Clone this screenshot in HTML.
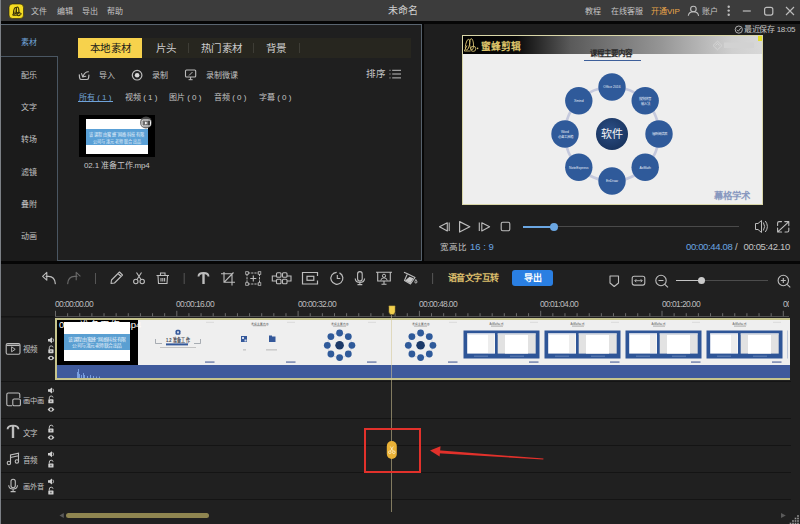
<!DOCTYPE html>
<html lang="zh-CN"><head><meta charset="utf-8">
<style>
*{margin:0;padding:0;box-sizing:border-box}
html,body{width:800px;height:524px;overflow:hidden;background:#060606;font-family:"Liberation Sans",sans-serif;color:#c4c4c4}
.a{position:absolute}
.t{position:absolute;white-space:nowrap;line-height:1}
svg.full{position:absolute;left:0;top:0;width:800px;height:524px;overflow:visible}
</style></head><body>
<div class="a" style="left:0px;top:0px;width:1px;height:524px;background:#7c8086;"></div>
<div class="a" style="left:1px;top:0px;width:799px;height:21px;background:#3c3c3c;"></div>
<div class="a" style="left:1px;top:24px;width:421px;height:237px;background:#1f1f1f;border-top:1px solid #5a6570;border-right:1px solid #56616c"></div>
<div class="a" style="left:1px;top:56px;width:57px;height:205px;background:#1b1b1b;border-top:1px solid #4a5662;border-right:1px solid #4a5662"></div>
<div class="a" style="left:57px;top:260px;width:365px;height:1px;background:#4a5662;"></div>
<div class="a" style="left:424px;top:24px;width:376px;height:237px;background:#1e1e1e;"></div>
<div class="a" style="left:1px;top:264px;width:799px;height:260px;background:#202020;"></div>
<div class="t" style="left:31px;top:8px;font-size:8px;color:#c4c4c4;">文件</div>
<div class="t" style="left:57px;top:8px;font-size:8px;color:#c4c4c4;">编辑</div>
<div class="t" style="left:82px;top:8px;font-size:8px;color:#c4c4c4;">导出</div>
<div class="t" style="left:107px;top:8px;font-size:8px;color:#c4c4c4;">帮助</div>
<div class="t" style="left:388px;top:6px;font-size:10px;color:#d0d0d0;">未命名</div>
<div class="t" style="left:585px;top:8px;font-size:8px;color:#c4c4c4;">教程</div>
<div class="t" style="left:611px;top:8px;font-size:8px;color:#c4c4c4;">在线客服</div>
<div class="t" style="left:651px;top:8px;font-size:8px;color:#eba64a;">开通VIP</div>
<div class="t" style="left:702px;top:8px;font-size:8px;color:#c4c4c4;">账户</div>
<div class="t" style="left:744px;top:26px;font-size:8px;color:#c4c4c4;letter-spacing:-0.3px">最近保存 18:05</div>
<div class="t" style="left:21px;top:39px;font-size:8px;color:#6fa2d8;">素材</div>
<div class="t" style="left:21px;top:72px;font-size:8px;color:#c4c4c4;">配乐</div>
<div class="t" style="left:21px;top:104px;font-size:8px;color:#c4c4c4;">文字</div>
<div class="t" style="left:21px;top:136px;font-size:8px;color:#c4c4c4;">转场</div>
<div class="t" style="left:21px;top:169px;font-size:8px;color:#c4c4c4;">滤镜</div>
<div class="t" style="left:21px;top:201px;font-size:8px;color:#c4c4c4;">叠附</div>
<div class="t" style="left:21px;top:233px;font-size:8px;color:#c4c4c4;">动画</div>
<div class="a" style="left:78px;top:38px;width:333px;height:20px;background:#27261f;"></div>
<div class="a" style="left:78px;top:38px;width:64px;height:20px;background:#f7d24c;"></div>
<div class="t" style="left:90px;top:42.5px;font-size:10.5px;color:#1a1a1a;letter-spacing:0.4px">本地素材</div>
<div class="t" style="left:156px;top:42.5px;font-size:10.5px;color:#cdcdcd;letter-spacing:0.4px">片头</div>
<div class="t" style="left:201px;top:42.5px;font-size:10.5px;color:#cdcdcd;letter-spacing:0.4px">热门素材</div>
<div class="t" style="left:266px;top:42.5px;font-size:10.5px;color:#cdcdcd;letter-spacing:0.4px">背景</div>
<div class="a" style="left:188px;top:43px;width:1px;height:10px;background:#3e3d36;"></div>
<div class="a" style="left:253px;top:43px;width:1px;height:10px;background:#3e3d36;"></div>
<div class="a" style="left:299px;top:43px;width:1px;height:10px;background:#3e3d36;"></div>
<div class="t" style="left:99px;top:72px;font-size:8px;color:#c4c4c4;">导入</div>
<div class="t" style="left:152px;top:72px;font-size:8px;color:#c4c4c4;">录制</div>
<div class="t" style="left:206px;top:72px;font-size:8px;color:#c4c4c4;">录制微课</div>
<div class="t" style="left:366px;top:69px;font-size:9.5px;color:#c4c4c4;">排序</div>
<div class="t" style="left:79px;top:94px;font-size:8px;color:#6fa2d8;">所有 ( 1 )</div>
<div class="a" style="left:78px;top:101px;width:35px;height:1px;background:#6fa2d8;"></div>
<div class="t" style="left:125px;top:94px;font-size:8px;color:#c4c4c4;">视频 ( 1 )</div>
<div class="t" style="left:169px;top:94px;font-size:8px;color:#c4c4c4;">图片 ( 0 )</div>
<div class="t" style="left:214px;top:94px;font-size:8px;color:#c4c4c4;">音频 ( 0 )</div>
<div class="t" style="left:259px;top:94px;font-size:8px;color:#c4c4c4;">字幕 ( 0 )</div>
<div class="a" style="left:79px;top:115px;width:76px;height:42px;background:#000;"></div>
<div class="a" style="left:86px;top:119px;width:62px;height:35px;background:#fff;"></div>
<div class="a" style="left:86px;top:129px;width:62px;height:16px;background:#5aa0d6;"></div>
<div class="t" style="left:84px;top:162px;font-size:8px;color:#c8c8c8;letter-spacing:-0.15px">02.1 准备工作.mp4</div>
<div class="a" style="left:462px;top:35px;width:301px;height:170px;background:#eeeeee;border:1px solid #d9d6a8"></div>
<div class="a" style="left:463px;top:36px;width:299px;height:18px;background:linear-gradient(90deg,#000 0%,#0a0a0a 18%,#5a5a5a 36%,#959595 66%,#cfcfcf 90%,#d8d8d8 100%)"></div>
<div class="a" style="left:757.5px;top:36px;width:4.5px;height:4.5px;background:#e2dc28;"></div>
<div class="t" style="left:481px;top:41.5px;font-size:9.8px;color:#dcc36a;font-weight:bold">蜜蜂剪辑</div>
<div class="t" style="left:590px;top:50px;font-size:7.5px;color:#2a2a2a;font-weight:bold">课程主要内容</div>
<div class="a" style="left:584px;top:60px;width:57px;height:1px;background:#3d5f9a;"></div>
<div class="t" style="left:714px;top:191px;font-size:9.4px;color:#8898bf;font-weight:bold">幕格学术</div>
<div class="a" style="left:523px;top:226px;width:216px;height:1px;background:#4a4a4a;"></div>
<div class="a" style="left:523px;top:226px;width:31px;height:2px;background:#6aa6e2;"></div>
<div class="a" style="left:550px;top:223px;width:8px;height:8px;border-radius:50%;background:#6aa6e2"></div>
<div class="t" style="left:440px;top:243px;font-size:8.5px;color:#c4c4c4;">宽高比</div>
<div class="t" style="left:470px;top:242px;font-size:9.5px;color:#6aa6e2;">16 : 9</div>
<div class="t" style="left:686px;top:242px;font-size:9.5px;color:#6aa6e2;letter-spacing:-0.35px">00:00:44.08</div>
<div class="t" style="left:735px;top:242px;font-size:9.5px;color:#c4c4c4;">/</div>
<div class="t" style="left:743.5px;top:242px;font-size:9.5px;color:#c4c4c4;letter-spacing:-0.35px">00:05:42.10</div>
<div class="t" style="left:447.5px;top:273.5px;font-size:9px;color:#dcbe6c;font-weight:bold;letter-spacing:-0.5px">语音文字互转</div>
<div class="a" style="left:512px;top:270px;width:41px;height:16px;background:#2a7fe2;border-radius:3px"></div>
<div class="t" style="left:524px;top:274px;font-size:9px;color:#ffffff;font-weight:bold">导出</div>
<div class="a" style="left:676px;top:280px;width:92px;height:1px;background:#4c4c4c;"></div>
<div class="a" style="left:676px;top:279.8px;width:25px;height:1.6px;background:#c4c4c4;"></div>
<div class="a" style="left:697.5px;top:277px;width:7px;height:7px;border-radius:50%;background:#cacaca"></div>
<div class="a" style="left:0;top:290px;width:789px;height:20px;overflow:hidden">
<div class="t" style="left:55px;top:9.5px;font-size:8.5px;color:#bdbdbd;letter-spacing:-0.62px">00:00:00.00</div>
<div class="t" style="left:176px;top:9.5px;font-size:8.5px;color:#bdbdbd;letter-spacing:-0.62px">00:00:16.00</div>
<div class="t" style="left:298px;top:9.5px;font-size:8.5px;color:#bdbdbd;letter-spacing:-0.62px">00:00:32.00</div>
<div class="t" style="left:419px;top:9.5px;font-size:8.5px;color:#bdbdbd;letter-spacing:-0.62px">00:00:48.00</div>
<div class="t" style="left:540px;top:9.5px;font-size:8.5px;color:#bdbdbd;letter-spacing:-0.62px">00:01:04.00</div>
<div class="t" style="left:662px;top:9.5px;font-size:8.5px;color:#bdbdbd;letter-spacing:-0.62px">00:01:20.00</div>
<div class="t" style="left:783px;top:9.5px;font-size:8.5px;color:#bdbdbd;letter-spacing:-0.62px">00:01:36.00</div>
</div>
<div class="a" style="left:1px;top:381px;width:790px;height:1px;background:#141414;"></div>
<div class="a" style="left:1px;top:418px;width:790px;height:1px;background:#141414;"></div>
<div class="a" style="left:1px;top:445px;width:790px;height:1px;background:#141414;"></div>
<div class="a" style="left:1px;top:472px;width:790px;height:1px;background:#141414;"></div>
<div class="a" style="left:1px;top:499px;width:790px;height:1px;background:#141414;"></div>
<div class="t" style="left:23px;top:346px;font-size:7.5px;color:#c4c4c4;">视频</div>
<div class="t" style="left:23px;top:397px;font-size:7.2px;color:#c4c4c4;">画中画</div>
<div class="t" style="left:23px;top:429.5px;font-size:7.5px;color:#c4c4c4;">文字</div>
<div class="t" style="left:23px;top:456.5px;font-size:7.5px;color:#c4c4c4;">音频</div>
<div class="t" style="left:23px;top:482.5px;font-size:7.2px;color:#c4c4c4;">画外音</div>
<svg class="full" viewBox="0 0 800 524"><rect x="9" y="4" width="14.5" height="14.5" rx="3.5" fill="#f5dc22" stroke="#2a2400" stroke-width="0.6"/><g fill="none" stroke="#3a3208" stroke-width="1.1"><ellipse cx="15" cy="10.8" rx="1.3" ry="3.4" transform="rotate(12 15 10.8)"/><ellipse cx="17.6" cy="10.5" rx="1.3" ry="3.5" transform="rotate(-4 17.6 10.5)"/><path d="M12.6 15.3 L14.4 11.8 M12.6 15.3 L16.8 15.3"/><circle cx="18.6" cy="14" r="1.7"/></g><circle cx="21.3" cy="13.8" r="0.6" fill="#3a3208"/><circle cx="693.4" cy="9" r="2.8" fill="none" stroke="#bdbdbd" stroke-width="1.1"/><path d="M688.3 15.8 Q688.8 11.8 693.4 11.8 Q698 11.8 698.6 15.8" fill="none" stroke="#bdbdbd" stroke-width="1.1"/><circle cx="728.7" cy="6.7" r="1.2" fill="#bdbdbd"/><circle cx="728.7" cy="10.6" r="1.2" fill="#bdbdbd"/><circle cx="728.7" cy="14.8" r="1.2" fill="#bdbdbd"/><line x1="742.8" y1="11" x2="750.8" y2="11" stroke="#bdbdbd" stroke-width="1.2"/><rect x="764.6" y="7.3" width="8.2" height="7.8" rx="2" fill="none" stroke="#bdbdbd" stroke-width="1.2"/><path d="M786 7 L794 15 M794 7 L786 15" stroke="#bdbdbd" stroke-width="1.1"/><circle cx="738.8" cy="29.6" r="3.6" fill="none" stroke="#bdbdbd" stroke-width="0.9"/><path d="M736.9 29.7 L738.4 31.2 L740.8 27.9" fill="none" stroke="#bdbdbd" stroke-width="0.9"/><path d="M79.3 74.8 L79.6 77.8 Q79.9 79.5 81.6 79.5 L86.6 79.5 Q88.3 79.5 88.6 77.8 L88.9 75.2" fill="none" stroke="#bdbdbd" stroke-width="1.2" stroke-linecap="round"/><path d="M88.4 71.8 Q85 71.6 83.2 76 M81.6 73.6 L82.7 77 L85.8 76.2" fill="none" stroke="#bdbdbd" stroke-width="1.1" stroke-linecap="round" stroke-linejoin="round"/><circle cx="137.1" cy="75.2" r="4.8" fill="none" stroke="#bdbdbd" stroke-width="1.2"/><circle cx="137.1" cy="75.2" r="2.3" fill="#d8d8d8"/><rect x="185.5" y="70" width="10.2" height="7" rx="1" fill="none" stroke="#bdbdbd" stroke-width="1.1"/><path d="M190.6 77 L190.6 79.5 M188.6 79.7 L192.6 79.7 M189 75.5 L192.5 72" fill="none" stroke="#bdbdbd" stroke-width="1"/><rect x="389.5" y="69.8" width="1" height="1" fill="#bdbdbd"/><line x1="392.2" y1="70.3" x2="401" y2="70.3" stroke="#bdbdbd" stroke-width="1"/><rect x="389.5" y="73.5" width="1" height="1" fill="#bdbdbd"/><line x1="392.2" y1="74" x2="401" y2="74" stroke="#bdbdbd" stroke-width="1"/><rect x="389.5" y="77.4" width="1" height="1" fill="#bdbdbd"/><line x1="392.2" y1="77.9" x2="401" y2="77.9" stroke="#bdbdbd" stroke-width="1"/><text x="117" y="136.3" font-size="4.6" fill="#e8f2fb" text-anchor="middle" textLength="56" lengthAdjust="spacingAndGlyphs">该课程由蜜蜂“网络科技有限</text><text x="117" y="142.5" font-size="4.6" fill="#e8f2fb" text-anchor="middle" textLength="49" lengthAdjust="spacingAndGlyphs">公司与漆元老师联合出品</text><circle cx="146" cy="122.5" r="6" fill="#555" opacity="0.85"/><rect x="142" y="120" width="8.5" height="6" rx="1.2" fill="none" stroke="#f2f2f2" stroke-width="1"/><path d="M145 121.5 L147.8 123 L145 124.5 Z" fill="#f2f2f2"/><g fill="none" stroke="#dcc676" stroke-width="0.85"><ellipse cx="467.6" cy="44.6" rx="1.9" ry="5.4" transform="rotate(12 467.6 44.6)"/><ellipse cx="471.6" cy="44.2" rx="1.9" ry="5.6" transform="rotate(-4 471.6 44.2)"/><path d="M464.3 51 L467 45.5 M464.3 51 L470.5 51"/><circle cx="473.2" cy="48.8" r="2.6"/></g><circle cx="477.6" cy="48.4" r="0.8" fill="#dcc676"/><g fill="none" stroke="#d6d6d6" stroke-width="0.9"><path d="M713 45.5 L717.5 41.2 L722 45.5 L717.5 49.8 Z"/><path d="M715.5 45.5 L717.5 43.5 L719.5 45.5"/></g><rect x="724" y="42.5" width="30" height="5.5" fill="#d2d2d2"/><circle cx="612" cy="134" r="47" fill="none" stroke="#c5c9dd" stroke-width="2.6"/><circle cx="612.0" cy="87.0" r="13.7" fill="#2f5a9a"/><text x="612.0" y="88.3" font-size="3.4" fill="#e6ecf6" text-anchor="middle" font-family="Liberation Sans">Office 2016</text><circle cx="645.2" cy="100.8" r="13.7" fill="#2f5a9a"/><text x="645.2" y="99.6" font-size="3.4" fill="#e6ecf6" text-anchor="middle" font-family="Liberation Sans">搜狗拼音</text><text x="645.2" y="104.6" font-size="3.4" fill="#e6ecf6" text-anchor="middle" font-family="Liberation Sans">输入法</text><circle cx="659.0" cy="134.0" r="13.7" fill="#2f5a9a"/><text x="659.0" y="135.3" font-size="3.4" fill="#e6ecf6" text-anchor="middle" font-family="Liberation Sans">福昕阅读器</text><circle cx="645.2" cy="167.2" r="13.7" fill="#2f5a9a"/><text x="645.2" y="168.5" font-size="3.4" fill="#e6ecf6" text-anchor="middle" font-family="Liberation Sans">AxMath</text><circle cx="612.0" cy="181.0" r="13.7" fill="#2f5a9a"/><text x="612.0" y="182.3" font-size="3.4" fill="#e6ecf6" text-anchor="middle" font-family="Liberation Sans">EnDraw</text><circle cx="578.8" cy="167.2" r="13.7" fill="#2f5a9a"/><text x="578.8" y="168.5" font-size="3.4" fill="#e6ecf6" text-anchor="middle" font-family="Liberation Sans">NoteExpress</text><circle cx="565.0" cy="134.0" r="13.7" fill="#2f5a9a"/><text x="565.0" y="132.8" font-size="3.4" fill="#e6ecf6" text-anchor="middle" font-family="Liberation Sans">Word</text><text x="565.0" y="137.8" font-size="3.4" fill="#e6ecf6" text-anchor="middle" font-family="Liberation Sans">必备工具箱</text><circle cx="578.8" cy="100.8" r="13.7" fill="#2f5a9a"/><text x="578.8" y="102.1" font-size="3.4" fill="#e6ecf6" text-anchor="middle" font-family="Liberation Sans">Xmind</text><defs><radialGradient id="cg" cx="0.45" cy="0.4" r="0.6"><stop offset="0" stop-color="#2c4f86"/><stop offset="1" stop-color="#19345f"/></radialGradient></defs><circle cx="612" cy="134" r="16" fill="url(#cg)"/><text x="612" y="138.3" font-size="11" fill="#f4f4f4" text-anchor="middle" font-family="Liberation Sans">软件</text><path d="M447.3 222.7 L439.5 226.8 L447.3 231 Z" fill="none" stroke="#bdbdbd" stroke-width="1.1" stroke-linejoin="round"/><line x1="449.2" y1="222.5" x2="449.2" y2="231" stroke="#bdbdbd" stroke-width="1.1"/><path d="M459.6 221.6 L469.8 226.8 L459.6 232 Z" fill="none" stroke="#bdbdbd" stroke-width="1.2" stroke-linejoin="round"/><line x1="479.3" y1="222.5" x2="479.3" y2="231" stroke="#bdbdbd" stroke-width="1.1"/><path d="M481.8 222.7 L489.6 226.8 L481.8 231 Z" fill="none" stroke="#bdbdbd" stroke-width="1.1" stroke-linejoin="round"/><rect x="501.2" y="222.2" width="8.6" height="8.6" rx="1.5" fill="none" stroke="#bdbdbd" stroke-width="1.1"/><path d="M755.5 223.5 L758 223.5 L761.5 220.5 L761.5 232.5 L758 229.5 L755.5 229.5 Z" fill="none" stroke="#bdbdbd" stroke-width="1"/><path d="M763.3 222.5 Q766 226.5 763.3 230.5 M765.3 221 Q769.5 226.5 765.3 232" fill="none" stroke="#bdbdbd" stroke-width="1"/><path d="M777.6 225.5 L777.6 223 Q777.6 221.6 779 221.6 L781.5 221.6 M788.8 228 L788.8 230.6 Q788.8 232 787.4 232 L785 232 M784.8 221.6 L788.8 221.6 L788.8 225.6 M777.6 228 L777.6 232 L781.6 232 M778.3 231.3 L788.1 222.3" fill="none" stroke="#bdbdbd" stroke-width="1.1" stroke-linecap="round" stroke-linejoin="round"/><path d="M55.3 283.6 Q54.8 276.3 48.5 276.3 L46 276.3" fill="none" stroke="#bdbdbd" stroke-width="1.2" stroke-linecap="round"/><path d="M42.6 276.3 L46.8 272.4 L46.8 280.2 Z" fill="none" stroke="#bdbdbd" stroke-width="1.1" stroke-linejoin="round"/><path d="M67.7 283.6 Q68.2 276.3 74.5 276.3 L77 276.3" fill="none" stroke="#686868" stroke-width="1.2" stroke-linecap="round"/><path d="M80.4 276.3 L76.2 272.4 L76.2 280.2" fill="none" stroke="#686868" stroke-width="1.1" stroke-linejoin="round"/><line x1="95.5" y1="273" x2="95.5" y2="284" stroke="#555" stroke-width="1"/><line x1="184.2" y1="273" x2="184.2" y2="284" stroke="#555" stroke-width="1"/><line x1="432.6" y1="273" x2="432.6" y2="284" stroke="#555" stroke-width="1"/><path d="M111 283.5 L111.5 280 L119.5 272 L122.5 275 L114.5 283 Z M118 273.5 L121 276.5" fill="none" stroke="#bdbdbd" stroke-width="1.1" stroke-linejoin="round"/><circle cx="135.8" cy="281.5" r="2.2" fill="none" stroke="#bdbdbd" stroke-width="1.1"/><circle cx="142.2" cy="281.5" r="2.2" fill="none" stroke="#bdbdbd" stroke-width="1.1"/><path d="M137 279.5 L141.5 272.5 M141 279.5 L136.5 272.5" stroke="#bdbdbd" stroke-width="1.1"/><path d="M156.5 275.5 L169 275.5 M160.5 275.5 L160.5 273 L165 273 L165 275.5 M158 276 L158.5 283.5 L167 283.5 L167.5 276 M161 278 L161 281.5 M162.8 278 L162.8 281.5 M164.6 278 L164.6 281.5" fill="none" stroke="#bdbdbd" stroke-width="1.1"/><path d="M198.5 276.5 Q198.5 273 203.5 273 Q208.5 273 208.5 276.5" fill="none" stroke="#bdbdbd" stroke-width="1.9"/><path d="M203.5 273 L203.5 284" stroke="#bdbdbd" stroke-width="2.4"/><path d="M224 272 L224 282.2 L235 282.2 M221 273.8 L232 273.8 L232 285.5 M224.5 281.8 L233.5 272.5" fill="none" stroke="#bdbdbd" stroke-width="1.1"/><path d="M248 273 L258.5 273 M248 284 L258.5 284 M247 274 L247 283 M259.5 274 L259.5 283" fill="none" stroke="#bdbdbd" stroke-width="1" stroke-dasharray="2.2 1"/><rect x="245.7" y="271.7" width="2.6" height="2.6" fill="none" stroke="#bdbdbd" stroke-width="0.8"/><rect x="258.2" y="271.7" width="2.6" height="2.6" fill="none" stroke="#bdbdbd" stroke-width="0.8"/><rect x="245.7" y="282.7" width="2.6" height="2.6" fill="none" stroke="#bdbdbd" stroke-width="0.8"/><rect x="258.2" y="282.7" width="2.6" height="2.6" fill="none" stroke="#bdbdbd" stroke-width="0.8"/><path d="M253.3 275.5 L253.3 281.5 M250.3 278.5 L256.3 278.5" stroke="#bdbdbd" stroke-width="1.1"/><g fill="none" stroke="#bdbdbd" stroke-width="1.1"><rect x="276.5" y="272.8" width="4.5" height="4.5" rx="1"/><rect x="282.5" y="272.8" width="4.5" height="4.5" rx="1"/><rect x="276.5" y="279.3" width="4.5" height="4.5" rx="1"/><rect x="282.5" y="279.3" width="4.5" height="4.5" rx="1"/><path d="M276.5 276 L272.3 276 L272.3 281 L276.5 281 M287 276 L291 276 L291 281 L287 281"/></g><path d="M317.5 276 L317.5 272.5 L302.5 272.5 L302.5 284 L317.5 284 L317.5 280.5" fill="none" stroke="#bdbdbd" stroke-width="1.2"/><rect x="307" y="276.3" width="6.8" height="4" fill="none" stroke="#bdbdbd" stroke-width="1.2"/><path d="M339.5 272.9 A6 6 0 1 1 336.7 272.3" fill="none" stroke="#bdbdbd" stroke-width="1.2"/><path d="M337.3 275 L337.3 278.5 L340.3 278.5" fill="none" stroke="#bdbdbd" stroke-width="1.1"/><rect x="357.6" y="271.6" width="4.6" height="9.5" rx="2.3" fill="none" stroke="#bdbdbd" stroke-width="1.1"/><path d="M355.2 278.5 Q355.5 282.5 359.9 282.5 Q364.3 282.5 364.6 278.5 M359.9 282.5 L359.9 284.5 M357.5 284.6 L362.3 284.6" fill="none" stroke="#bdbdbd" stroke-width="1.1"/><path d="M376 272.2 L392 272.2 M377.7 272.5 L377.7 281 L390.3 281 L390.3 272.5 M384 281 L384 284 M381.5 284.3 L386.5 284.3" fill="none" stroke="#bdbdbd" stroke-width="1.1"/><circle cx="384" cy="275.8" r="1.6" fill="none" stroke="#bdbdbd" stroke-width="1"/><path d="M380.8 280.5 Q381 277.8 384 277.8 Q387 277.8 387.2 280.5" fill="none" stroke="#bdbdbd" stroke-width="1"/><path d="M404 272.2 L408 274 L415 277.5 L410.5 284 L404.5 280.5 L407.5 273.5" fill="none" stroke="#bdbdbd" stroke-width="1.1" stroke-linejoin="round"/><path d="M405.2 280.5 L409.5 276.8 L413.5 278.3 L410.4 283.2 Z" fill="#c8c8c8"/><path d="M415.8 279.5 Q414.3 282 415.2 283 Q416.8 283.5 417 282 Q417 281 415.8 279.5 Z" fill="none" stroke="#bdbdbd" stroke-width="0.9"/><path d="M610 276 L618.5 276 L618.5 283 L614.2 286.5 L610 283 Z" fill="none" stroke="#bdbdbd" stroke-width="1.1" stroke-linejoin="round"/><rect x="632.2" y="276.3" width="12.6" height="8.8" rx="2" fill="none" stroke="#bdbdbd" stroke-width="1.1"/><path d="M634.8 280.7 L642.2 280.7 M636.3 279.2 L634.8 280.7 L636.3 282.2 M640.7 279.2 L642.2 280.7 L640.7 282.2" fill="none" stroke="#bdbdbd" stroke-width="0.9"/><circle cx="661" cy="280.5" r="5.2" fill="none" stroke="#bdbdbd" stroke-width="1.1"/><path d="M664.8 284.3 L668 287.3 M658.5 280.5 L663.5 280.5" stroke="#bdbdbd" stroke-width="1.1"/><circle cx="783.3" cy="280.5" r="5.2" fill="none" stroke="#bdbdbd" stroke-width="1.1"/><path d="M787.1 284.3 L790.3 287.3 M780.8 280.5 L785.8 280.5 M783.3 278 L783.3 283" stroke="#bdbdbd" stroke-width="1.1"/><rect x="1" y="316" width="54" height="1.5" fill="#151515"/><line x1="55" y1="316.5" x2="789" y2="316.5" stroke="#505050" stroke-width="1"/><line x1="55.50" y1="310.8" x2="55.50" y2="316.3" stroke="#747474" stroke-width="0.9"/><line x1="67.63" y1="313.2" x2="67.63" y2="316.3" stroke="#747474" stroke-width="0.9"/><line x1="79.76" y1="313.2" x2="79.76" y2="316.3" stroke="#747474" stroke-width="0.9"/><line x1="91.89" y1="313.2" x2="91.89" y2="316.3" stroke="#747474" stroke-width="0.9"/><line x1="104.02" y1="313.2" x2="104.02" y2="316.3" stroke="#747474" stroke-width="0.9"/><line x1="116.15" y1="313.2" x2="116.15" y2="316.3" stroke="#747474" stroke-width="0.9"/><line x1="128.28" y1="313.2" x2="128.28" y2="316.3" stroke="#747474" stroke-width="0.9"/><line x1="140.41" y1="313.2" x2="140.41" y2="316.3" stroke="#747474" stroke-width="0.9"/><line x1="152.54" y1="313.2" x2="152.54" y2="316.3" stroke="#747474" stroke-width="0.9"/><line x1="164.67" y1="313.2" x2="164.67" y2="316.3" stroke="#747474" stroke-width="0.9"/><line x1="176.80" y1="310.8" x2="176.80" y2="316.3" stroke="#747474" stroke-width="0.9"/><line x1="188.93" y1="313.2" x2="188.93" y2="316.3" stroke="#747474" stroke-width="0.9"/><line x1="201.06" y1="313.2" x2="201.06" y2="316.3" stroke="#747474" stroke-width="0.9"/><line x1="213.19" y1="313.2" x2="213.19" y2="316.3" stroke="#747474" stroke-width="0.9"/><line x1="225.32" y1="313.2" x2="225.32" y2="316.3" stroke="#747474" stroke-width="0.9"/><line x1="237.45" y1="313.2" x2="237.45" y2="316.3" stroke="#747474" stroke-width="0.9"/><line x1="249.58" y1="313.2" x2="249.58" y2="316.3" stroke="#747474" stroke-width="0.9"/><line x1="261.71" y1="313.2" x2="261.71" y2="316.3" stroke="#747474" stroke-width="0.9"/><line x1="273.84" y1="313.2" x2="273.84" y2="316.3" stroke="#747474" stroke-width="0.9"/><line x1="285.97" y1="313.2" x2="285.97" y2="316.3" stroke="#747474" stroke-width="0.9"/><line x1="298.10" y1="310.8" x2="298.10" y2="316.3" stroke="#747474" stroke-width="0.9"/><line x1="310.23" y1="313.2" x2="310.23" y2="316.3" stroke="#747474" stroke-width="0.9"/><line x1="322.36" y1="313.2" x2="322.36" y2="316.3" stroke="#747474" stroke-width="0.9"/><line x1="334.49" y1="313.2" x2="334.49" y2="316.3" stroke="#747474" stroke-width="0.9"/><line x1="346.62" y1="313.2" x2="346.62" y2="316.3" stroke="#747474" stroke-width="0.9"/><line x1="358.75" y1="313.2" x2="358.75" y2="316.3" stroke="#747474" stroke-width="0.9"/><line x1="370.88" y1="313.2" x2="370.88" y2="316.3" stroke="#747474" stroke-width="0.9"/><line x1="383.01" y1="313.2" x2="383.01" y2="316.3" stroke="#747474" stroke-width="0.9"/><line x1="395.14" y1="313.2" x2="395.14" y2="316.3" stroke="#747474" stroke-width="0.9"/><line x1="407.27" y1="313.2" x2="407.27" y2="316.3" stroke="#747474" stroke-width="0.9"/><line x1="419.40" y1="310.8" x2="419.40" y2="316.3" stroke="#747474" stroke-width="0.9"/><line x1="431.53" y1="313.2" x2="431.53" y2="316.3" stroke="#747474" stroke-width="0.9"/><line x1="443.66" y1="313.2" x2="443.66" y2="316.3" stroke="#747474" stroke-width="0.9"/><line x1="455.79" y1="313.2" x2="455.79" y2="316.3" stroke="#747474" stroke-width="0.9"/><line x1="467.92" y1="313.2" x2="467.92" y2="316.3" stroke="#747474" stroke-width="0.9"/><line x1="480.05" y1="313.2" x2="480.05" y2="316.3" stroke="#747474" stroke-width="0.9"/><line x1="492.18" y1="313.2" x2="492.18" y2="316.3" stroke="#747474" stroke-width="0.9"/><line x1="504.31" y1="313.2" x2="504.31" y2="316.3" stroke="#747474" stroke-width="0.9"/><line x1="516.44" y1="313.2" x2="516.44" y2="316.3" stroke="#747474" stroke-width="0.9"/><line x1="528.57" y1="313.2" x2="528.57" y2="316.3" stroke="#747474" stroke-width="0.9"/><line x1="540.70" y1="310.8" x2="540.70" y2="316.3" stroke="#747474" stroke-width="0.9"/><line x1="552.83" y1="313.2" x2="552.83" y2="316.3" stroke="#747474" stroke-width="0.9"/><line x1="564.96" y1="313.2" x2="564.96" y2="316.3" stroke="#747474" stroke-width="0.9"/><line x1="577.09" y1="313.2" x2="577.09" y2="316.3" stroke="#747474" stroke-width="0.9"/><line x1="589.22" y1="313.2" x2="589.22" y2="316.3" stroke="#747474" stroke-width="0.9"/><line x1="601.35" y1="313.2" x2="601.35" y2="316.3" stroke="#747474" stroke-width="0.9"/><line x1="613.48" y1="313.2" x2="613.48" y2="316.3" stroke="#747474" stroke-width="0.9"/><line x1="625.61" y1="313.2" x2="625.61" y2="316.3" stroke="#747474" stroke-width="0.9"/><line x1="637.74" y1="313.2" x2="637.74" y2="316.3" stroke="#747474" stroke-width="0.9"/><line x1="649.87" y1="313.2" x2="649.87" y2="316.3" stroke="#747474" stroke-width="0.9"/><line x1="662.00" y1="310.8" x2="662.00" y2="316.3" stroke="#747474" stroke-width="0.9"/><line x1="674.13" y1="313.2" x2="674.13" y2="316.3" stroke="#747474" stroke-width="0.9"/><line x1="686.26" y1="313.2" x2="686.26" y2="316.3" stroke="#747474" stroke-width="0.9"/><line x1="698.39" y1="313.2" x2="698.39" y2="316.3" stroke="#747474" stroke-width="0.9"/><line x1="710.52" y1="313.2" x2="710.52" y2="316.3" stroke="#747474" stroke-width="0.9"/><line x1="722.65" y1="313.2" x2="722.65" y2="316.3" stroke="#747474" stroke-width="0.9"/><line x1="734.78" y1="313.2" x2="734.78" y2="316.3" stroke="#747474" stroke-width="0.9"/><line x1="746.91" y1="313.2" x2="746.91" y2="316.3" stroke="#747474" stroke-width="0.9"/><line x1="759.04" y1="313.2" x2="759.04" y2="316.3" stroke="#747474" stroke-width="0.9"/><line x1="771.17" y1="313.2" x2="771.17" y2="316.3" stroke="#747474" stroke-width="0.9"/><line x1="783.30" y1="310.8" x2="783.30" y2="316.3" stroke="#747474" stroke-width="0.9"/><rect x="6.2" y="343.5" width="13.8" height="10.8" rx="1.5" fill="none" stroke="#bdbdbd" stroke-width="1.1"/><line x1="6.5" y1="345.3" x2="19.7" y2="345.3" stroke="#bdbdbd" stroke-width="1.5"/><path d="M11.6 346.8 L15.2 349.3 L11.6 351.8 Z" fill="none" stroke="#bdbdbd" stroke-width="0.9"/><path d="M12 405.8 L8.3 405.8 Q6.8 405.8 6.8 404.3 L6.8 394.5 Q6.8 393 8.3 393 L18.3 393 Q19.8 393 19.8 394.5 L19.8 398" fill="none" stroke="#bdbdbd" stroke-width="1.1"/><rect x="12.8" y="399" width="7.6" height="6.8" rx="1.3" fill="none" stroke="#bdbdbd" stroke-width="1.1"/><path d="M7.6 429.2 Q7.6 425.6 13 425.6 Q18.4 425.6 18.4 429.2" fill="none" stroke="#bdbdbd" stroke-width="1.9"/><path d="M13 425.5 L13 438" stroke="#bdbdbd" stroke-width="2.4"/><path d="M10.5 463 L10.5 455 L18.5 453.3 L18.5 461.5 M10.5 457.5 L18.5 455.8" fill="none" stroke="#bdbdbd" stroke-width="1.1"/><circle cx="8.9" cy="463" r="1.7" fill="none" stroke="#bdbdbd" stroke-width="1.1"/><circle cx="16.9" cy="461.5" r="1.7" fill="none" stroke="#bdbdbd" stroke-width="1.1"/><rect x="11" y="479.2" width="4.3" height="8.5" rx="2.1" fill="none" stroke="#bdbdbd" stroke-width="1.1"/><path d="M8.7 485.3 Q8.9 489 13.1 489 Q17.3 489 17.5 485.3 M13.1 489 L13.1 491.5 M10.6 491.6 L15.6 491.6" fill="none" stroke="#bdbdbd" stroke-width="1.1"/><path d="M48 338.9 L49.6 338.9 L52 337.2 L52 343.2 L49.6 341.5 L48 341.5 Z" fill="#d0d0d0"/><path d="M52.8 338.4 Q54.3 340.2 52.8 342.0" fill="none" stroke="#d0d0d0" stroke-width="0.9"/><rect x="48.3" y="349.2" width="5.2" height="4" rx="0.6" fill="#d0d0d0"/><path d="M49.3 349.2 L49.3 347.7 Q49.3 345.9 51.2 345.9 Q53 345.9 53 347.4" fill="none" stroke="#d0d0d0" stroke-width="0.9"/><rect x="50.5" y="350.4" width="0.9" height="1.6" fill="#202020"/><path d="M47.6 358 Q51 353.4 54.4 358 Q51 362.6 47.6 358 Z" fill="#d0d0d0"/><circle cx="51" cy="358" r="1.2" fill="#202020"/><path d="M48 389.2 L49.6 389.2 L52 387.5 L52 393.5 L49.6 391.8 L48 391.8 Z" fill="#d0d0d0"/><path d="M52.8 388.7 Q54.3 390.5 52.8 392.3" fill="none" stroke="#d0d0d0" stroke-width="0.9"/><rect x="48.3" y="399.3" width="5.2" height="4" rx="0.6" fill="#d0d0d0"/><path d="M49.3 399.3 L49.3 397.8 Q49.3 396.0 51.2 396.0 Q53 396.0 53 397.5" fill="none" stroke="#d0d0d0" stroke-width="0.9"/><rect x="50.5" y="400.5" width="0.9" height="1.6" fill="#202020"/><path d="M47.6 409.5 Q51 404.9 54.4 409.5 Q51 414.1 47.6 409.5 Z" fill="#d0d0d0"/><circle cx="51" cy="409.5" r="1.2" fill="#202020"/><rect x="48.3" y="428.5" width="5.2" height="4" rx="0.6" fill="#d0d0d0"/><path d="M49.3 428.5 L49.3 427.0 Q49.3 425.2 51.2 425.2 Q53 425.2 53 426.7" fill="none" stroke="#d0d0d0" stroke-width="0.9"/><rect x="50.5" y="429.7" width="0.9" height="1.6" fill="#202020"/><path d="M47.6 437.5 Q51 432.9 54.4 437.5 Q51 442.1 47.6 437.5 Z" fill="#d0d0d0"/><circle cx="51" cy="437.5" r="1.2" fill="#202020"/><path d="M48 452.9 L49.6 452.9 L52 451.2 L52 457.2 L49.6 455.5 L48 455.5 Z" fill="#d0d0d0"/><path d="M52.8 452.4 Q54.3 454.2 52.8 456.0" fill="none" stroke="#d0d0d0" stroke-width="0.9"/><rect x="48.3" y="463.5" width="5.2" height="4" rx="0.6" fill="#d0d0d0"/><path d="M49.3 463.5 L49.3 462.0 Q49.3 460.2 51.2 460.2 Q53 460.2 53 461.7" fill="none" stroke="#d0d0d0" stroke-width="0.9"/><rect x="50.5" y="464.7" width="0.9" height="1.6" fill="#202020"/><path d="M48 480.2 L49.6 480.2 L52 478.5 L52 484.5 L49.6 482.8 L48 482.8 Z" fill="#d0d0d0"/><path d="M52.8 479.7 Q54.3 481.5 52.8 483.3" fill="none" stroke="#d0d0d0" stroke-width="0.9"/><rect x="48.3" y="490.5" width="5.2" height="4" rx="0.6" fill="#d0d0d0"/><path d="M49.3 490.5 L49.3 489.0 Q49.3 487.2 51.2 487.2 Q53 487.2 53 488.7" fill="none" stroke="#d0d0d0" stroke-width="0.9"/><rect x="50.5" y="491.7" width="0.9" height="1.6" fill="#202020"/></svg>
<div class="a" style="left:55px;top:317.5px;width:734.5px;height:62.5px;background:#efefef;border:2px solid #c6c48c;border-right:none"></div>
<div class="a" style="left:57px;top:364.5px;width:732.5px;height:13.5px;background:#3f5a9c;"></div>
<div class="a" style="left:57px;top:319.5px;width:81px;height:45px;background:#000;"></div>
<div class="a" style="left:64px;top:322px;width:66px;height:38.5px;background:#fff;"></div>
<div class="a" style="left:64px;top:334px;width:66px;height:15.7px;background:#5a9fd2;"></div>
<svg class="full" viewBox="0 0 800 524"><defs><clipPath id="clp"><rect x="57" y="319.5" width="730.5" height="58.5"/></clipPath></defs><g clip-path="url(#clp)"><text x="97" y="340.5" font-size="4.2" fill="#eaf3fb" text-anchor="middle" textLength="58" lengthAdjust="spacingAndGlyphs">该课程由蜜蜂“网络科技有限</text><text x="97" y="346.5" font-size="4.2" fill="#eaf3fb" text-anchor="middle" textLength="50" lengthAdjust="spacingAndGlyphs">公司与漆元老师联合出品</text><rect x="175.5" y="329.8" width="5" height="5" rx="1.5" fill="#34589a"/><rect x="177" y="331.3" width="2" height="2" fill="#c8d2e6"/><path d="M155.5 339 L155.5 343.5 L162 343.5 M194 343.5 L200.5 343.5 L200.5 339" fill="none" stroke="#8a909a" stroke-width="0.7"/><text x="178" y="341.6" font-size="5.6" fill="#3c424e" text-anchor="middle" textLength="24" lengthAdjust="spacingAndGlyphs" font-weight="bold">1.2 准备工作</text><rect x="166" y="343.4" width="22" height="2" fill="#34589a"/><rect x="160" y="347" width="36" height="0.8" fill="#b8b8b8"/><rect x="205" y="361.3" width="9.5" height="1.6" fill="#7d8bb3"/><rect x="206" y="321.8" width="8" height="1" fill="#dadada"/><text x="259.5" y="324.7" font-size="2.6" fill="#555" text-anchor="middle">课程主要内容</text><rect x="253" y="325.6" width="13" height="0.5" fill="#666"/><rect x="241" y="336" width="6" height="6" fill="#34589a"/><rect x="242" y="337" width="2" height="2" fill="#cfd8ea"/><rect x="244.5" y="339.5" width="2" height="2" fill="#cfd8ea"/><rect x="269" y="336.5" width="6.5" height="5.5" fill="#34589a"/><rect x="269" y="335.5" width="3" height="1.5" fill="#34589a"/><rect x="243" y="349.5" width="3" height="0.8" fill="#aaa"/><rect x="266" y="349.5" width="11" height="0.8" fill="#aaa"/><rect x="286" y="361.3" width="9.5" height="1.6" fill="#7d8bb3"/><rect x="287" y="321.8" width="8" height="1" fill="#dadada"/><text x="339.6" y="324.8" font-size="2.6" fill="#555" text-anchor="middle">课程主要内容</text><rect x="333.1" y="325.8" width="13" height="0.5" fill="#666"/><circle cx="339.6" cy="345.3" r="12.3" fill="none" stroke="#c6cadb" stroke-width="0.8"/><circle cx="339.60" cy="333.00" r="3.4" fill="#2f5a9a"/><circle cx="348.30" cy="336.60" r="3.4" fill="#2f5a9a"/><circle cx="351.90" cy="345.30" r="3.4" fill="#2f5a9a"/><circle cx="348.30" cy="354.00" r="3.4" fill="#2f5a9a"/><circle cx="339.60" cy="357.60" r="3.4" fill="#2f5a9a"/><circle cx="330.90" cy="354.00" r="3.4" fill="#2f5a9a"/><circle cx="327.30" cy="345.30" r="3.4" fill="#2f5a9a"/><circle cx="330.90" cy="336.60" r="3.4" fill="#2f5a9a"/><circle cx="339.6" cy="345.3" r="4.3" fill="#1d3a68"/><rect x="367" y="361.3" width="9.5" height="1.6" fill="#7d8bb3"/><rect x="368" y="321.8" width="8" height="1" fill="#dadada"/><text x="420.6" y="324.8" font-size="2.6" fill="#555" text-anchor="middle">课程主要内容</text><rect x="414.1" y="325.8" width="13" height="0.5" fill="#666"/><circle cx="420.6" cy="345.3" r="12.3" fill="none" stroke="#c6cadb" stroke-width="0.8"/><circle cx="420.60" cy="333.00" r="3.4" fill="#2f5a9a"/><circle cx="429.30" cy="336.60" r="3.4" fill="#2f5a9a"/><circle cx="432.90" cy="345.30" r="3.4" fill="#2f5a9a"/><circle cx="429.30" cy="354.00" r="3.4" fill="#2f5a9a"/><circle cx="420.60" cy="357.60" r="3.4" fill="#2f5a9a"/><circle cx="411.90" cy="354.00" r="3.4" fill="#2f5a9a"/><circle cx="408.30" cy="345.30" r="3.4" fill="#2f5a9a"/><circle cx="411.90" cy="336.60" r="3.4" fill="#2f5a9a"/><circle cx="420.6" cy="345.3" r="4.3" fill="#1d3a68"/><rect x="448" y="361.3" width="9.5" height="1.6" fill="#7d8bb3"/><rect x="449" y="321.8" width="8" height="1" fill="#dadada"/><text x="497" y="325" font-size="2.6" fill="#555" text-anchor="middle">AxMath公式</text><rect x="491" y="325.8" width="12" height="0.5" fill="#666"/><rect x="463.5" y="330.5" width="76" height="28" fill="#2e5597"/><rect x="467.2" y="333.4" width="27.8" height="20.2" fill="#ffffff"/><rect x="488" y="334.5" width="6.5" height="18.5" fill="#ededed"/><rect x="467.2" y="333.4" width="27.8" height="1.2" fill="#d8dde8"/><rect x="497.7" y="333.4" width="38" height="20.2" fill="#e2e2e2"/><rect x="505" y="335" width="23" height="18.6" fill="#ffffff"/><rect x="497.7" y="333.4" width="38" height="1.2" fill="#cfd6e2"/><rect x="474" y="355.8" width="14" height="0.6" fill="#8aa0cc"/><rect x="510" y="355.8" width="14" height="0.6" fill="#8aa0cc"/><rect x="529" y="361.3" width="9.5" height="1.6" fill="#7d8bb3"/><rect x="530" y="321.8" width="8" height="1" fill="#dadada"/><text x="578" y="325" font-size="2.6" fill="#555" text-anchor="middle">AxMath公式</text><rect x="572" y="325.8" width="12" height="0.5" fill="#666"/><rect x="544.5" y="330.5" width="76" height="28" fill="#2e5597"/><rect x="548.2" y="333.4" width="27.8" height="20.2" fill="#ffffff"/><rect x="569" y="334.5" width="6.5" height="18.5" fill="#ededed"/><rect x="548.2" y="333.4" width="27.8" height="1.2" fill="#d8dde8"/><rect x="578.7" y="333.4" width="38" height="20.2" fill="#e2e2e2"/><rect x="586" y="335" width="23" height="18.6" fill="#ffffff"/><rect x="578.7" y="333.4" width="38" height="1.2" fill="#cfd6e2"/><rect x="555" y="355.8" width="14" height="0.6" fill="#8aa0cc"/><rect x="591" y="355.8" width="14" height="0.6" fill="#8aa0cc"/><rect x="610" y="361.3" width="9.5" height="1.6" fill="#7d8bb3"/><rect x="611" y="321.8" width="8" height="1" fill="#dadada"/><text x="659" y="325" font-size="2.6" fill="#555" text-anchor="middle">AxMath公式</text><rect x="653" y="325.8" width="12" height="0.5" fill="#666"/><rect x="625.5" y="330.5" width="76" height="28" fill="#2e5597"/><rect x="629.2" y="333.4" width="27.8" height="20.2" fill="#ffffff"/><rect x="650" y="334.5" width="6.5" height="18.5" fill="#ededed"/><rect x="629.2" y="333.4" width="27.8" height="1.2" fill="#d8dde8"/><rect x="659.7" y="333.4" width="38" height="20.2" fill="#e2e2e2"/><rect x="667" y="335" width="23" height="18.6" fill="#ffffff"/><rect x="659.7" y="333.4" width="38" height="1.2" fill="#cfd6e2"/><rect x="636" y="355.8" width="14" height="0.6" fill="#8aa0cc"/><rect x="672" y="355.8" width="14" height="0.6" fill="#8aa0cc"/><rect x="691" y="361.3" width="9.5" height="1.6" fill="#7d8bb3"/><rect x="692" y="321.8" width="8" height="1" fill="#dadada"/><text x="740" y="325" font-size="2.6" fill="#555" text-anchor="middle">AxMath公式</text><rect x="734" y="325.8" width="12" height="0.5" fill="#666"/><rect x="706.5" y="330.5" width="76" height="28" fill="#2e5597"/><rect x="710.2" y="333.4" width="27.8" height="20.2" fill="#ffffff"/><rect x="731" y="334.5" width="6.5" height="18.5" fill="#ededed"/><rect x="710.2" y="333.4" width="27.8" height="1.2" fill="#d8dde8"/><rect x="740.7" y="333.4" width="38" height="20.2" fill="#e2e2e2"/><rect x="748" y="335" width="23" height="18.6" fill="#ffffff"/><rect x="740.7" y="333.4" width="38" height="1.2" fill="#cfd6e2"/><rect x="717" y="355.8" width="14" height="0.6" fill="#8aa0cc"/><rect x="753" y="355.8" width="14" height="0.6" fill="#8aa0cc"/><rect x="772" y="361.3" width="9.5" height="1.6" fill="#7d8bb3"/><rect x="773" y="321.8" width="8" height="1" fill="#dadada"/><text x="821" y="325" font-size="2.6" fill="#555" text-anchor="middle">AxMath公式</text><rect x="815" y="325.8" width="12" height="0.5" fill="#666"/><rect x="787.5" y="330.5" width="76" height="28" fill="#2e5597"/><rect x="791.2" y="333.4" width="27.8" height="20.2" fill="#ffffff"/><rect x="812" y="334.5" width="6.5" height="18.5" fill="#ededed"/><rect x="791.2" y="333.4" width="27.8" height="1.2" fill="#d8dde8"/><rect x="821.7" y="333.4" width="38" height="20.2" fill="#e2e2e2"/><rect x="829" y="335" width="23" height="18.6" fill="#ffffff"/><rect x="821.7" y="333.4" width="38" height="1.2" fill="#cfd6e2"/><rect x="798" y="355.8" width="14" height="0.6" fill="#8aa0cc"/><rect x="834" y="355.8" width="14" height="0.6" fill="#8aa0cc"/><rect x="853" y="361.3" width="9.5" height="1.6" fill="#7d8bb3"/><rect x="854" y="321.8" width="8" height="1" fill="#dadada"/><rect x="77" y="372" width="0.9" height="6" fill="#7fa6e8"/><rect x="78" y="369" width="0.9" height="9" fill="#7fa6e8"/><rect x="79" y="374" width="0.9" height="4" fill="#7fa6e8"/><rect x="81" y="375" width="0.9" height="3" fill="#7fa6e8"/><rect x="83" y="373" width="0.9" height="5" fill="#7fa6e8"/><rect x="84" y="375" width="0.9" height="3" fill="#7fa6e8"/><rect x="87" y="376" width="0.9" height="2" fill="#7fa6e8"/><rect x="90" y="375" width="0.9" height="3" fill="#7fa6e8"/><rect x="93" y="376" width="0.9" height="2" fill="#7fa6e8"/><rect x="96" y="376.5" width="0.9" height="1.5" fill="#7fa6e8"/><rect x="99" y="376.5" width="0.9" height="1.5" fill="#7fa6e8"/></g></svg>
<div class="t" style="left:59px;top:320px;font-size:9.5px;color:#ffffff;">02.1 准备工作.mp4</div>
<div class="a" style="left:391px;top:315px;width:1px;height:197px;background:rgba(212,198,150,0.55);"></div>
<div class="a" style="left:364px;top:428px;width:57px;height:45px;border:2px solid #e2312b"></div>
<div class="a" style="left:66px;top:513px;width:143px;height:5px;background:#8f8550;border-radius:3px"></div>
<svg class="full" viewBox="0 0 800 524"><path d="M388.7 306.3 Q388.7 305.6 389.4 305.6 L394.6 305.6 Q395.3 305.6 395.3 306.3 L395.3 311.4 Q395.3 314.8 392 314.8 Q388.7 314.8 388.7 311.4 Z" fill="#f2d04e" stroke="#1a1a1a" stroke-width="0.5"/><rect x="386.8" y="441" width="10" height="18" rx="5" fill="#e9b136"/><g fill="none" stroke="#fff6dc" stroke-width="0.7"><circle cx="389.8" cy="452.3" r="1.3"/><circle cx="393.8" cy="452.3" r="1.3"/><path d="M390.5 451 L393.3 446.5 M393.1 451 L390.3 446.5"/></g><path d="M438 450.2 L543.5 458.6 L543.3 459.6 L438 453.2 Z" fill="#e2312b"/><path d="M430 450.6 L440.5 446.2 L439.6 456.4 Z" fill="#e2312b"/><path d="M63.8 513 L59.5 515.5 L63.8 518 Z" fill="#5a5a5a"/><path d="M781 513 L785.8 515.5 L781 518 Z" fill="#5a5a5a"/><rect x="797.2" y="515.2" width="1.6" height="1.6" fill="#9a9a9a"/><rect x="797.2" y="517.7" width="1.6" height="1.6" fill="#9a9a9a"/><rect x="794.7" y="517.7" width="1.6" height="1.6" fill="#9a9a9a"/><rect x="797.2" y="520.2" width="1.6" height="1.6" fill="#9a9a9a"/><rect x="794.7" y="520.2" width="1.6" height="1.6" fill="#9a9a9a"/><rect x="792.2" y="520.2" width="1.6" height="1.6" fill="#9a9a9a"/><rect x="797.2" y="522.7" width="1.6" height="1.6" fill="#9a9a9a"/><rect x="794.7" y="522.7" width="1.6" height="1.6" fill="#9a9a9a"/><rect x="792.2" y="522.7" width="1.6" height="1.6" fill="#9a9a9a"/><rect x="789.7" y="522.7" width="1.6" height="1.6" fill="#9a9a9a"/></svg>
</body></html>
